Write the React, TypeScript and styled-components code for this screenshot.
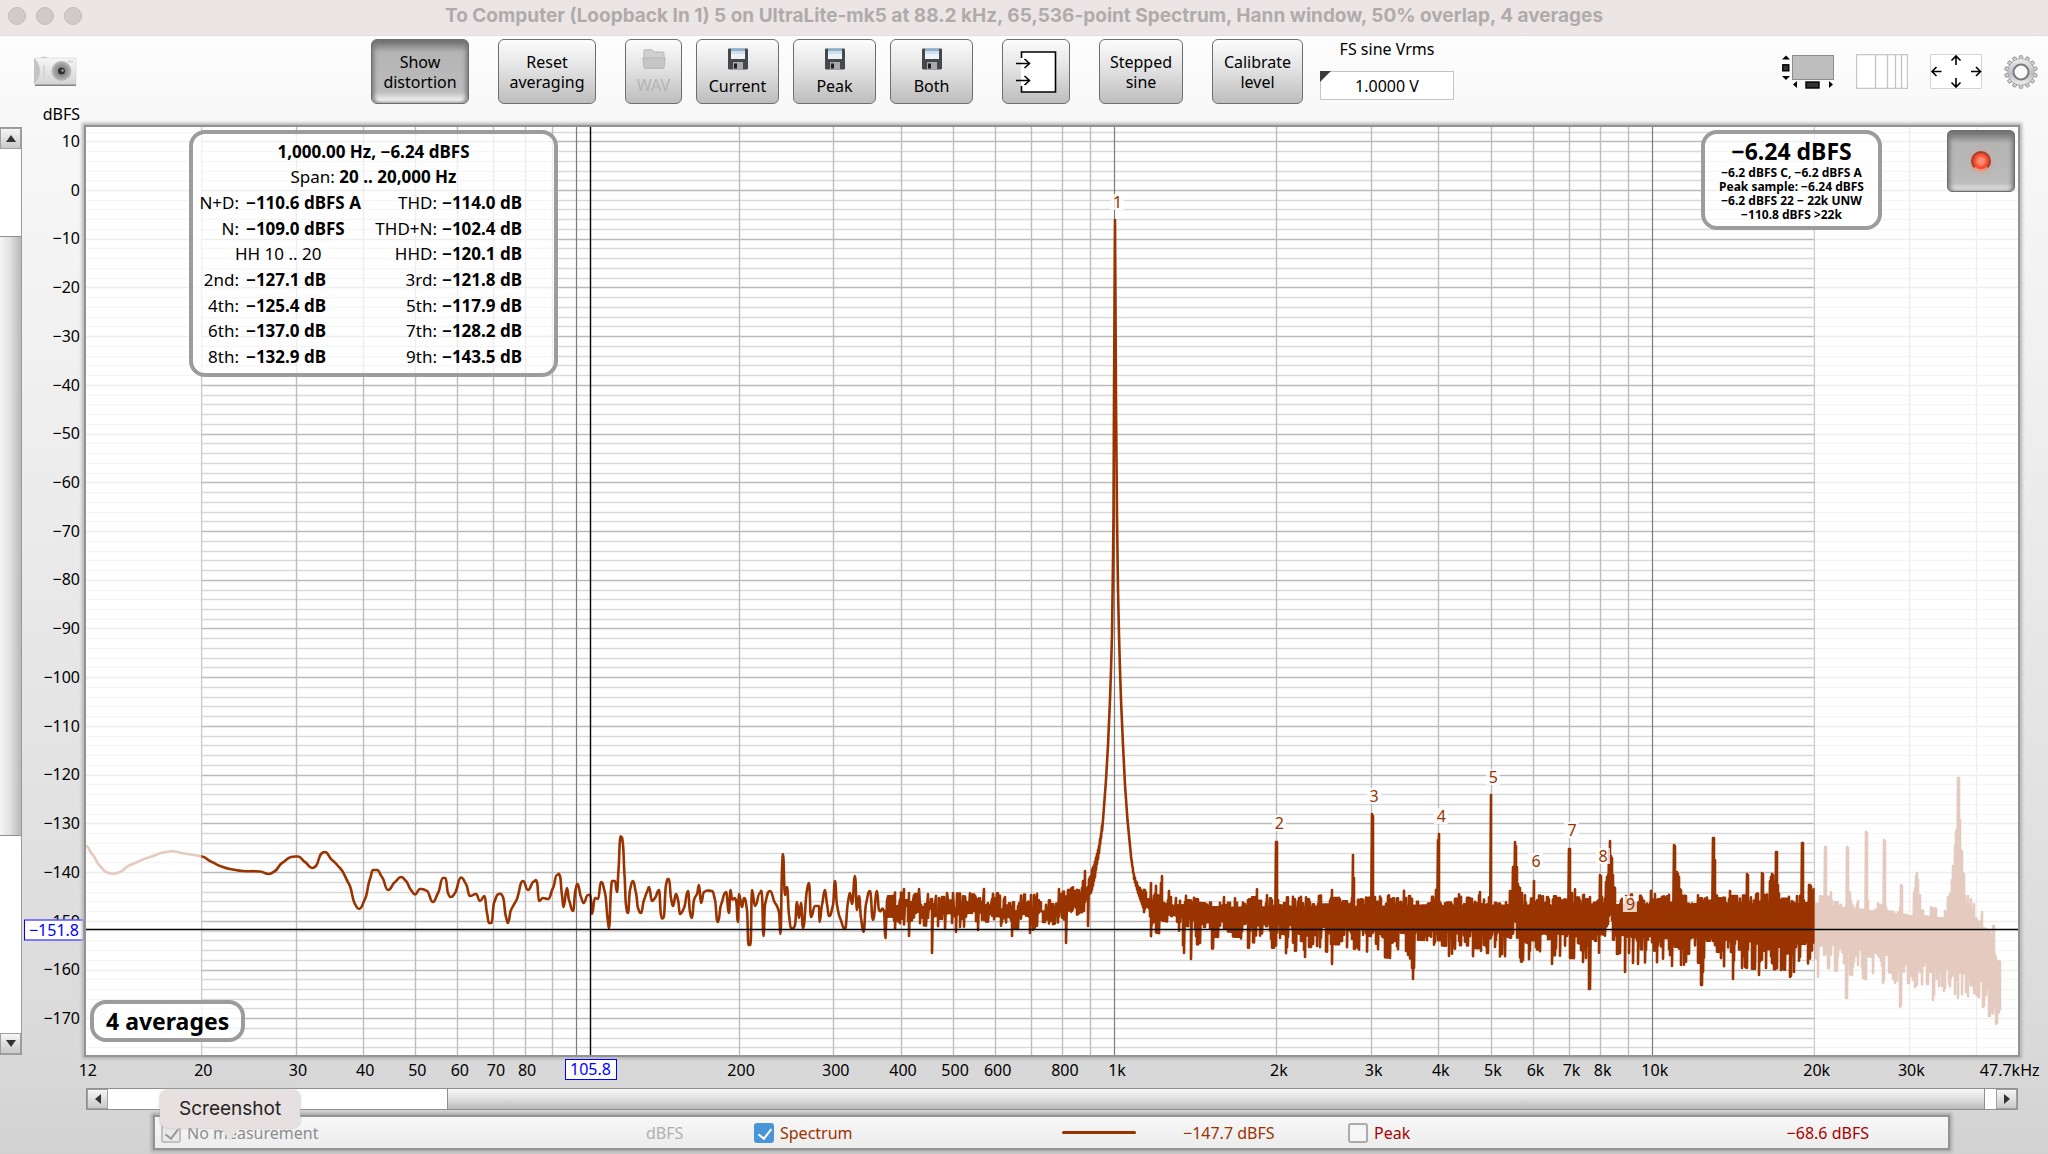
import React from "react";
import styled, { createGlobalStyle, css } from "styled-components";

const sans = `"Noto Sans", "Open Sans", sans-serif`;
const system = `Inter, "Liberation Sans", sans-serif`;
const TRACE = "#993300";

/* ---------- chart scales (drawing units of the chart's viewBox) ---------- */

const W = 1932;
const H = 928;
const fx = (hz: number) => 1029 + 537.8 * Math.log10(hz / 1000);
const dy = (db: number) => 63 - db * 4.872;
const pctX = (x: number) => `${(x / W) * 100}%`;
const pctY = (y: number) => `${(y / H) * 100}%`;

type Pt = [number, number];

/* Points below are kept in window pixels; shift() moves them into the chart. */
const shift = ([x, y]: Pt): Pt => [x - 86, y - 127];

const low: Pt[] = [
  [86, 846], [92, 854], [100, 866], [106, 872], [113, 873.6], [120, 872], [130, 865], [150, 857], [163, 852.5], [172, 851.3], [184, 853.5], [202, 856.5],
  [212, 862], [220, 866], [230, 869], [243, 871], [260, 871.5], [269, 874], [275, 871], [282, 863], [291, 857], [298, 856.5], [305, 862], [312, 868],
  [316, 866], [321, 854], [325, 852], [332, 860], [340, 868], [349, 884], [355, 904], [359, 909], [365, 899], [370, 879], [373, 870], [377, 870],
  [382, 877], [388, 890], [395, 882], [401, 877], [406, 881], [411, 890], [415, 894.5], [420, 889], [427, 891], [433, 902], [438, 893], [443, 878],
  [445.5, 878], [448, 893], [451, 897], [455, 893], [461, 877.5], [466, 884], [470, 896], [476, 894], [480, 901], [484.5, 896], [487, 913], [489, 923],
  [491.5, 923], [494, 903], [499, 894], [503, 897], [506, 917], [508, 923], [511, 910], [516, 901], [523, 881], [528, 890], [534, 881.5], [537, 882],
  [539, 901], [543, 898], [548, 899], [553, 888], [557, 875], [560, 876], [562, 895], [563.5, 907], [567, 888], [569, 900], [573, 911], [575.5, 890],
  [577.5, 884], [581, 897], [583.5, 903], [588, 895], [590.5, 895], [592, 914], [595, 898], [598, 899], [601, 882], [605, 893], [608, 922], [609, 928],
  [611, 890], [612, 881], [615, 881], [617, 892], [618.5, 870], [620, 840], [621.5, 837], [623, 845], [624.5, 875], [626, 905], [628, 913], [630, 890],
  [633, 881], [636, 893], [638, 908], [641, 913], [644, 900], [647, 892], [649, 887], [652, 901], [655, 898], [659, 890], [661, 915], [663.5, 918],
  [666, 885], [669, 879], [671, 898], [673, 906], [676, 894], [678, 900], [680, 914], [684, 908], [688, 891], [690, 912], [692, 918], [694, 900],
  [697, 894], [699, 885], [701, 903], [704, 892], [712, 891], [715, 900], [717, 920], [718, 922], [721, 905], [726, 892], [729, 913], [730.5, 890],
  [732, 899], [736, 900], [738, 922], [739, 894], [742, 907], [744, 898], [747, 910], [748.5, 945], [750.5, 945], [752, 890], [755, 906], [760, 893],
  [762, 895], [763.5, 936], [765, 905], [770, 891], [775, 903], [779, 912], [780.5, 934], [782, 870], [783, 854], [785, 895], [787, 887], [789, 915],
  [791, 928], [795, 925], [797, 902], [799, 918], [801, 903], [803, 928], [807, 890], [809, 883], [811, 917], [815, 906], [819, 906], [819.5, 922],
  [822, 905], [825, 890], [827, 904], [829, 916], [833, 905], [835, 881], [837, 905], [840, 918], [845, 929], [848, 902], [850, 893], [852, 904],
  [855, 876], [857, 910], [859, 896], [861, 918], [863.5, 932], [866, 904], [870, 891], [873, 920], [877, 891], [879, 910], [884, 911], [885.5, 938],
];

const dips: Record<number, number> = {
  895: 929, 909: 936, 932: 953, 945: 929, 956: 932, 978: 930, 1012: 936, 1030: 933, 1066: 943, 1088: 926,
  1184: 953, 1191: 959, 1332: 964, 1305: 957, 1390: 958, 1412: 968, 1413: 979, 1414: 968, 1449: 956, 1552: 964, 1583: 962, 1589: 989, 1590: 989,
  1625: 972, 1633: 963, 1638: 964, 1672: 966, 1681: 965, 1701: 985, 1702: 985, 1703: 972, 1733: 979, 1742: 968, 1759: 975, 1781: 970, 1782: 969,
  1790: 977, 1791: 976, 1794: 972, 1818: 977, 1846: 998, 1847: 998, 1863: 978, 1884: 980, 1893: 979, 1900: 1007, 1901: 1005, 1915: 987, 1933: 1000,
  1934: 995, 1944: 991, 1966: 992, 1983: 1007, 1984: 1006, 1989: 1016, 1990: 1016, 1996: 1024, 1997: 1023,
};

const peaks: Record<number, number> = {
  904: 889, 919: 889, 928: 894, 947: 893, 953: 893, 984: 889, 1005: 897, 1031: 895, 1059: 889, 1069: 890, 1075: 891, 1083: 881, 1085: 871,
  1151: 883, 1161: 883, 1162: 876, 1169: 891, 1276: 842, 1277: 842, 1353: 855, 1354: 878, 1372: 814, 1373: 816, 1436: 890,
  1438: 840, 1439: 834, 1480: 892, 1491: 795, 1510: 891, 1512: 891, 1513: 867, 1514: 867, 1515: 842, 1516: 846, 1517: 867,
  1518: 884, 1519: 887, 1520: 888, 1522: 893, 1534: 881, 1569: 849, 1570: 849, 1600: 875, 1601: 876, 1606: 882, 1607: 877, 1608: 875, 1609: 850,
  1610: 841, 1611: 856, 1612: 858, 1613: 875, 1614: 887, 1615: 888, 1655: 894, 1674: 845, 1675: 846, 1676: 872, 1677: 872, 1678: 874, 1679: 877,
  1680: 889, 1681: 890, 1713: 838, 1714: 838, 1715: 860, 1730: 891, 1747: 874, 1748: 875, 1762: 873, 1763: 874, 1770: 881, 1771: 877, 1772: 874,
  1773: 875, 1774: 881, 1776: 852, 1777: 852, 1778: 885, 1802: 843, 1803: 843, 1809: 885, 1810: 885, 1811: 886, 1813: 890, 1814: 889, 1825: 847,
  1826: 847, 1847: 847, 1848: 848, 1866: 832, 1867: 833, 1884: 840, 1885: 841, 1901: 885, 1902: 886, 1914: 893, 1915: 888, 1916: 876, 1917: 873,
  1918: 880, 1920: 895, 1948: 897, 1950: 894, 1951: 893, 1952: 880, 1953: 866, 1954: 866, 1955: 846, 1956: 831, 1957: 830, 1958: 778, 1959: 778,
  1960: 820, 1961: 850, 1962: 852, 1963: 873, 1964: 874, 1965: 895, 1968: 896, 1974: 904, 1982: 912, 1993: 926, 1994: 926,
};

/* Places where the lower edge of the noise band lifts off, baring the grid. */
const lifts: Record<number, number> = {
  1353: 914, 1514: 921, 1515: 921, 1516: 922, 1606: 927, 1607: 926, 1608: 924, 1609: 916, 1610: 911, 1611: 914, 1612: 920,
};

const makeRandom = (start: number) => {
  let s = start;
  return () => {
    s = (s * 1664525 + 1013904223) % 4294967296;
    return s / 4294967296;
  };
};

const lerp = (table: Pt[], x: number) => {
  for (let i = 1; i < table.length; i++) {
    if (x <= table[i][0]) {
      const [x0, y0] = table[i - 1];
      const [x1, y1] = table[i];
      return y0 + ((y1 - y0) * (x - x0)) / (x1 - x0);
    }
  }
  return table[table.length - 1][1];
};

const upper: Pt[] = [[886, 899], [1050, 901], [1070, 896], [1082, 889], [1088, 880], [1094, 866], [1099, 846], [1103, 820]];
const lowerMid: Pt[] = [[886, 917], [1000, 921], [1050, 922], [1070, 916], [1088, 903], [1094, 882], [1099, 852], [1103, 824]];
const bandTop: Pt[] = [[1131, 853], [1134, 873], [1138, 884], [1144, 897], [1160, 903], [1240, 905], [1500, 903], [1815, 901], [1850, 906], [1900, 913], [1945, 916], [1968, 908], [1978, 925], [1990, 930], [1995, 952], [2000, 968]];
const bandBottom: Pt[] = [[1131, 857], [1134, 879], [1138, 893], [1144, 910], [1150, 922], [1200, 932], [1300, 937], [1450, 942], [1640, 947], [1815, 954], [1860, 961], [1900, 969], [1940, 976], [1975, 985], [1990, 1000], [2000, 1018]];

const buildTrace = () => {
  const r = makeRandom(77123);
  const l = low.map(shift);
  let d = `M${l[0][0]} ${l[0][1]}`;
  for (let i = 0; i < l.length - 1; i++) {
    const a = l[i];
    const b = l[i + 1];
    const m = (a[0] + b[0]) / 2;
    const p = l[Math.max(0, i - 1)];
    const n = l[Math.min(l.length - 1, i + 2)];
    const turn = (b[1] - a[1]) * (a[1] - p[1]) <= 0;
    const turnNext = (n[1] - b[1]) * (b[1] - a[1]) <= 0;
    const c1 = turn ? a[1] : a[1] + (((b[1] - p[1]) / (b[0] - p[0] || 1)) * (b[0] - a[0])) / 3;
    const c2 = turnNext ? b[1] : b[1] - (((n[1] - a[1]) / (n[0] - a[0] || 1)) * (b[0] - a[0])) / 3;
    d += `C${m} ${c1.toFixed(1)} ${m} ${c2.toFixed(1)} ${b[0]} ${b[1]}`;
  }
  const to = (x: number, y: number) => {
    const [a, b] = shift([x, y]);
    d += `L${a} ${b.toFixed(1)}`;
  };
  let up = 0.5;
  let down = 0.5;
  for (let x = 887; x < 1103; x++) {
    const t = lerp(upper, x);
    const b = lerp(lowerMid, x);
    const spread = x < 1080 ? 20 : x < 1092 ? 12 : 3;
    if (r() > 0.4) up = r();
    if (r() > 0.4) down = r();
    const top = peaks[x] ?? t + (up - 0.4) * spread;
    const bottom = dips[x] ?? b + (down - 0.6) * spread;
    to(x, top);
    if (x % 2 === 0 || dips[x] || x > 1000) to(x, Math.max(bottom, top));
  }
  const skirt: Pt[] = [
    [1103, 820], [1106, 780], [1108, 745], [1110, 700], [1111, 670], [1112, 635], [1113, 560], [1113.5, 517], [1114, 400], [1115, 220],
    [1116, 400], [1117, 517], [1118, 590], [1119, 635], [1120, 670], [1121, 700], [1123, 745], [1125, 785], [1127.5, 820],
  ];
  skirt.forEach(([x, y]) => to(x, y));
  up = 0;
  down = 0;
  for (let x = 1131; x <= 2000; x++) {
    const t = lerp(bandTop, x);
    const b = lerp(bandBottom, x);
    if (r() > 0.5) up = r();
    if (r() > 0.4) down = r();
    const early = x < 1144;
    const spike = !early && r() > 0.95 ? 8 : 0;
    const top = peaks[x] ?? t + 3 - up * up * (early ? 4 : 11) - spike;
    const bottom = lifts[x] ?? dips[x] ?? b + (early ? 0 : down * down * 30 - 12);
    to(x, top);
    to(x, bottom);
  }
  return d;
};

const tracePath = buildTrace();

const minorDb = Array.from({ length: 95 }, (_, i) => 12 - i * 2);
const gridHz = [20, 30, 40, 50, 60, 70, 80, 90, 200, 300, 400, 500, 600, 700, 800, 900, 2000, 3000, 4000, 5000, 6000, 7000, 8000, 9000, 20000, 30000, 40000];
const decades = [100, 1000, 10000];
const yLabels = Array.from({ length: 19 }, (_, i) => 10 - i * 10);
const xLabels: [number, string][] = [
  [12.2, "12"], [20, "20"], [30, "30"], [40, "40"], [50, "50"], [60, "60"], [70, "70"], [80, "80"],
  [200, "200"], [300, "300"], [400, "400"], [500, "500"], [600, "600"], [800, "800"], [1000, "1k"],
  [2000, "2k"], [3000, "3k"], [4000, "4k"], [5000, "5k"], [6000, "6k"], [7000, "7k"], [8000, "8k"],
  [10000, "10k"], [20000, "20k"], [30000, "30k"], [45700, "47.7kHz"],
];
const harmonics: [number, number][] = [[1, 202], [2, 823], [3, 796], [4, 816], [5, 777], [6, 861], [7, 830], [8, 856], [9, 904]];

/* ------------------------------- styles ------------------------------- */

const Global = createGlobalStyle`
  * { box-sizing: border-box; }
  body { margin: 0; font: 16px/20px ${sans}; color: #000; }
  button, input { font: inherit; color: inherit; }
`;

const Window = styled.main`
  min-height: 100vh;
  display: flex;
  flex-direction: column;
  background: linear-gradient(#fdfdfd 36px, #f8f8f8 120px, #f0f0f0 32%, #dadada 90%, #d2d2d2);
`;

const TitleBar = styled.header`
  position: relative;
  display: flex;
  align-items: center;
  height: 36px;
  padding: 0 8px 4px;
  background: #ebe5e5;
  border-bottom: 1px solid #e2dfdf;
`;

const Lights = styled.div`
  position: absolute;
  display: flex;
  gap: 10px;
`;

const Light = styled.button`
  width: 18px;
  height: 18px;
  padding: 0;
  border: 1px solid #c3bcbc;
  border-radius: 50%;
  background: #d1cacb;
`;

const Title = styled.h1`
  flex: 1;
  margin: 0;
  text-align: center;
  font: 700 19px/24px ${system};
  color: #b0abab;
`;

const Toolbar = styled.div`
  display: flex;
  align-items: flex-start;
  height: 68px;
  padding: 3px 10px 0 34px;
`;

const IconButton = styled.button`
  display: flex;
  padding: 0;
  border: 0;
  background: none;
`;

const CameraButton = styled(IconButton)`
  margin-top: 17px;
`;

const Actions = styled.div`
  display: flex;
  gap: 29px;
  margin-left: 294px;
`;

const SaveGroup = styled.div`
  display: flex;
  gap: 14px;
`;

const pressed = css`
  background: linear-gradient(#6a6a6a, #b4b4b4 12px, #bcbcbc 52px, #f0f0f0 60px, #e4e4e4);
  box-shadow: inset 3px 0 4px -1px #777, inset -3px 0 4px -1px #777;
`;

const Tool = styled.button<{ $w: number; $on?: boolean }>`
  display: flex;
  flex-direction: column;
  align-items: center;
  justify-content: center;
  gap: 6px;
  width: ${(p) => p.$w}px;
  height: 65px;
  padding: 0;
  line-height: 20px;
  border: 1px solid #6e6e6e;
  border-radius: 6px;
  background: linear-gradient(#fcfcfc, #e3e3e3 45%, #bdbdbd);
  ${(p) => p.$on && pressed}
  &:disabled {
    color: #b4b4b4;
  }
`;

const FieldGroup = styled.label`
  display: flex;
  flex-direction: column;
  align-items: center;
  gap: 12px;
  margin-left: -12px;
`;

const FieldBox = styled.span`
  position: relative;
  display: block;
  &::before {
    content: "";
    position: absolute;
    left: 0;
    top: 0;
    border-top: 11px solid #3b3b3b;
    border-right: 11px solid transparent;
  }
`;

const Field = styled.input`
  display: block;
  width: 134px;
  height: 29px;
  padding: 0;
  text-align: center;
  background: #fff;
  border: 1px solid #c4c4c4;
`;

const ViewTools = styled.div`
  display: flex;
  align-items: center;
  gap: 22px;
  margin: 15px 0 0 auto;
`;

const Unit = styled.div`
  height: 23px;
  width: 80px;
  text-align: right;
`;

const Workspace = styled.section`
  flex: 1;
  display: grid;
  grid-template-columns: 22px 64px minmax(0, 1fr) 30px;
  grid-template-rows: minmax(600px, 1fr) 33px 22px;
`;

const ScrollV = styled.div`
  display: flex;
  flex-direction: column;
  background: #fff;
  border: 1px solid #9a9a9a;
  border-left: 0;
`;

const ScrollH = styled.div`
  grid-column: 3;
  grid-row: 3;
  display: flex;
  background: #fff;
  border: 1px solid #8f8f8f;
`;

const Arrow = styled.button<{ $dir: "up" | "down" | "left" | "right" }>`
  flex: none;
  display: grid;
  place-items: center;
  width: 21px;
  height: 21px;
  padding: 0;
  border: 1px solid #a0a0a0;
  background: linear-gradient(#f6f6f6, #c9c9c9);
  &::before {
    content: "";
    border: 5px solid transparent;
    ${(p) => p.$dir === "up" && "border-bottom: 7px solid #333; border-top: 0;"}
    ${(p) => p.$dir === "down" && "border-top: 7px solid #333; border-bottom: 0;"}
    ${(p) => p.$dir === "left" && "border-right: 6px solid #333; border-left: 0;"}
    ${(p) => p.$dir === "right" && "border-left: 6px solid #333; border-right: 0;"}
  }
  ${ScrollH} & {
    height: 20px;
  }
`;

const Space = styled.div<{ $grow: number }>`
  flex: ${(p) => p.$grow} 1 0;
`;

const ThumbV = styled(Space)`
  background: linear-gradient(90deg, #f6f6f6, #e2e2e2 45%, #b9b9b9);
  border: solid #8f8f8f;
  border-width: 1px 0;
`;

const ThumbH = styled(Space)`
  background: linear-gradient(#f8f8f8, #e2e2e2 45%, #b9b9b9);
  border: solid #8f8f8f;
  border-width: 0 1px;
`;

const AxisY = styled.div`
  position: relative;
  display: flex;
  flex-direction: column;
  justify-content: space-between;
  align-items: flex-end;
  padding: 4px 6px 27px 0;
`;

const AxisX = styled.div`
  position: relative;
  grid-column: 3;
  grid-row: 2;
`;

const Tick = styled.span`
  position: absolute;
  top: 5px;
  transform: translateX(-50%);
  padding-left: 4px;
  white-space: nowrap;
`;

const cursorBox = css`
  position: absolute;
  height: 21px;
  line-height: 19px;
  text-align: center;
  color: #00f;
  background: #fff;
  border: 1px solid #00f;
`;

const CursorX = styled.output`
  ${cursorBox}
  top: 4px;
  width: 52px;
  transform: translateX(-50%);
`;

const CursorY = styled.output`
  ${cursorBox}
  right: 2px;
  width: 60px;
  transform: translateY(-50%);
`;

const Plot = styled.div`
  position: relative;
  background: #fff;
  box-shadow: 0 0 0 2px #939393, 0 0 3px 4px #b4b4b4;
`;

const Chart = styled.svg`
  position: absolute;
  inset: 0;
  width: 100%;
  height: 100%;
  overflow: hidden;
`;

const Harmonic = styled.span`
  position: absolute;
  padding: 0 2px 0 3px;
  line-height: 16px;
  color: ${TRACE};
  background: rgba(255, 255, 255, 0.78);
  transform: translate(-50%, -50%);
`;

const panel = css`
  position: absolute;
  background: rgba(255, 255, 255, 0.75);
  border: 4px solid #9c9c9c;
  border-radius: 16px;
`;

const Distortion = styled.section`
  ${panel}
  left: 103px;
  top: 3px;
  width: 369px;
  height: 247px;
  padding: 5px 28px 3px 6px;
  display: grid;
  grid-template-columns: 40px 7px 1fr 76px 5px 84px;
  grid-auto-rows: 1fr;
  align-items: center;
  font-size: 17px;
`;

const Wide = styled.p`
  grid-column: 1 / -1;
  margin: 0 -22px 0 0;
  text-align: center;
`;

const Name = styled.span<{ $right?: boolean }>`
  grid-column: ${(p) => (p.$right ? 4 : 1)};
  justify-self: end;
  white-space: nowrap;
`;

const Value = styled.b<{ $right?: boolean }>`
  grid-column: ${(p) => (p.$right ? 6 : 3)};
  white-space: nowrap;
`;

const Harm = styled.span`
  grid-column: 1 / 4;
  padding-left: 36px;
`;

const Level = styled.section`
  ${panel}
  right: 136px;
  top: 3px;
  width: 181px;
  height: 100px;
  padding-top: 2px;
  text-align: center;
  font-weight: 700;
  font-size: 12px;
  line-height: 14px;
  white-space: nowrap;
`;

const Big = styled.div`
  font-size: 23px;
  line-height: 30px;
`;

const Record = styled.button`
  position: absolute;
  right: 3px;
  top: 3px;
  display: grid;
  place-items: center;
  width: 68px;
  height: 62px;
  padding: 0;
  border: 1px solid #6e6e6e;
  border-radius: 5px;
  ${pressed}
`;

const Lamp = styled.span`
  width: 20px;
  height: 20px;
  border-radius: 50%;
  border: 2px solid #93432f;
  border-bottom-color: #e8907a;
  background: radial-gradient(circle, #ff8a76 25%, #fb4426 60%);
  box-shadow: 0 1px 4px 1px #d9a493;
`;

const Averages = styled.div`
  ${panel}
  left: 4px;
  bottom: 13px;
  padding: 5px 12px;
  font-size: 23px;
  line-height: 24px;
  font-weight: 700;
`;

const Legend = styled.footer`
  position: relative;
  display: flex;
  align-items: center;
  height: 31px;
  margin: 7px 100px 6px 155px;
  padding: 0 79px 0 6px;
  background: linear-gradient(#f8f8f8, #ececec);
  box-shadow: 0 0 0 2px #939393, 0 0 3px 4px #ababab;
`;

const Check = styled.label<{ $color: string; $w: number }>`
  display: flex;
  align-items: center;
  gap: 6px;
  width: ${(p) => p.$w}px;
  color: ${(p) => p.$color};
`;

const Box = styled.input`
  appearance: none;
  position: relative;
  flex: none;
  width: 20px;
  height: 20px;
  margin: 0;
  border: 2px solid #ababab;
  border-radius: 3px;
  background: #f6f6f6;
  &:checked::after {
    content: "";
    position: absolute;
    left: 5px;
    top: 1px;
    width: 6px;
    height: 11px;
    border: solid #fff;
    border-width: 0 2px 2px 0;
    transform: rotate(38deg);
  }
  &:checked {
    background: #4a94d8;
    border-color: #4a94d8;
  }
  &:disabled {
    background: #e9e9e9;
    border: 2px solid #c0c0c0;
  }
  &:disabled::after {
    border-color: #999;
  }
`;

const Reading = styled.span<{ $color: string; $w?: number }>`
  width: ${(p) => (p.$w ? `${p.$w}px` : "auto")};
  color: ${(p) => p.$color};
`;

const Swatch = styled.span`
  width: 74px;
  height: 3px;
  margin-right: 47px;
  border-radius: 2px;
  background: ${TRACE};
`;

const Filler = styled.span`
  flex: 1;
`;

const Tooltip = styled.div`
  position: absolute;
  left: 5px;
  bottom: 20px;
  z-index: 2;
  padding: 7px 19px;
  font: 19px/24px ${system};
  color: #262323;
  background: #e7e0e0;
  border-radius: 8px;
  box-shadow: 0 0 3px #b9b3b3;
  &::after {
    content: "";
    position: absolute;
    left: 50%;
    top: 100%;
    margin-left: -9px;
    border: 9px solid transparent;
    border-top: 13px solid #e7e0e0;
    border-bottom: 0;
  }
`;

/* ------------------------------- icons ------------------------------- */

const Camera = () => (
  <svg width="43" height="31" viewBox="0 0 43 31" aria-hidden="true">
    <defs>
      <linearGradient id="camBody" x2="0" y2="1">
        <stop offset="0" stopColor="#f7f7f7" />
        <stop offset="1" stopColor="#d2d2d2" />
      </linearGradient>
      <radialGradient id="camLens">
        <stop offset="0" stopColor="#666" />
        <stop offset=".45" stopColor="#8b8b8b" />
        <stop offset="1" stopColor="#bdbdbd" />
      </radialGradient>
    </defs>
    <path d="M6 2q4-3 9 0l1 2H5z" fill="#c9c9c9" />
    <path d="M1 2H42V29H1Q11 15 1 2z" fill="url(#camBody)" stroke="#d5d5d5" strokeWidth=".7" />
    <path d="M0 2Q12 15 0 29z" fill="#c4c4c4" />
    <path d="M1 29.300H42" stroke="#838383" strokeWidth="1.500" />
    <path d="M10 9v12" stroke="#c8c8c8" />
    <rect x="34" y="4" width="5" height="3" fill="#ddd" />
    <circle cx="27.500" cy="15" r="10" fill="url(#camLens)" />
    <circle cx="27.500" cy="15" r="5.500" fill="#909090" />
    <circle cx="27.500" cy="15" r="3.500" fill="#2e2e2e" />
    <circle cx="28.500" cy="14.500" r="1.200" fill="#aaa" />
  </svg>
);

const Floppy = () => (
  <svg width="20" height="22" viewBox="0 0 20 22" aria-hidden="true">
    <path d="M0 1.500Q0 .5 1 .5H19Q20 .5 20 1.500V20.500L19 21.500H1L0 20.500z" fill="#47484b" />
    <path d="M3 .5H17V11H3z" fill="#cfe0ef" />
    <path d="M3 .5H17V3H3z" fill="#8fb0c8" />
    <path d="M3 6H17V11H3z" fill="#edf3f8" />
    <path d="M5 14H15V21.500H5z" fill="#a9a9ab" />
    <path d="M6 15.500H9V20.500H6z" fill="#1e1e1e" />
  </svg>
);

const Folder = () => (
  <svg width="24" height="20" viewBox="0 0 24 20" aria-hidden="true">
    <path d="M2 10V1.500Q2 .8 3 .8H10L12 3H21Q22 3 22 4V10z" fill="#cfcfcf" stroke="#b7b7b7" />
    <path d="M.8 9H23.200L22 18.500Q22 19.300 21 19.300H3Q2 19.300 2 18.500z" fill="#c6c6c6" stroke="#b5b5b5" />
  </svg>
);

const InputIcon = () => (
  <svg width="42" height="42" viewBox="0 0 42 42" fill="none" stroke="#000" strokeWidth="1.600" aria-hidden="true">
    <path d="M6 1H41V41H6z" fill="#fff" stroke="none" />
    <path d="M6.500 7V1H40.500V41H6.500V35" />
    <path d="M1 12.500H14M9.500 8l5 4.500l-5 4.500M1 29.500H14M9.500 25l5 4.500l-5 4.500" />
  </svg>
);

const ScrollbarsIcon = () => (
  <svg width="52" height="34" viewBox="0 0 52 34" aria-hidden="true">
    <rect x="10.500" y=".5" width="41" height="24" fill="#bebebe" stroke="#8d8d8d" />
    <path d="M0 4.500L4 .5L8 4.500zM0 21L4 25L8 21zM15 26v7l-4-3.500zM47 26v7l4-3.500z" />
    <rect x=".8" y="9.800" width="6" height="6" fill="#333" stroke="#000" strokeWidth="1.400" />
    <rect x="24" y="27" width="13" height="6" fill="#333" stroke="#000" strokeWidth="1.400" />
  </svg>
);

const ColumnsIcon = () => (
  <svg width="52" height="35" viewBox="0 0 52 35" aria-hidden="true">
    <path d="M.5 .5H51.500V34.500H.5zM19.500 .5V34M31.500 .5V34M39.500 .5V34M45.500 .5V34" fill="#fff" stroke="#c4c4c4" strokeWidth="1.300" />
  </svg>
);

const FitIcon = () => (
  <svg width="52" height="35" viewBox="0 0 52 35" aria-hidden="true">
    <path d="M.5 .5H51.500V34.500H.5z" fill="#fff" stroke="#d4d4d4" />
    <path
      d="M26 11V2M21.500 6.500L26 2L30.500 6.500M26 24V33M21.500 28.500L26 33L30.500 28.500M11.500 17.500H2M6.500 13L2 17.500L6.500 22M41 17.500H50.500M46 13L50.500 17.500L46 22"
      fill="none"
      stroke="#000"
      strokeWidth="1.600"
    />
  </svg>
);

const Gear = () => (
  <svg width="34" height="34" viewBox="-17 -17 34 34" aria-hidden="true">
    <defs>
      <linearGradient id="gear" x2="0" y2="1">
        <stop offset="0" stopColor="#e6e6e6" />
        <stop offset=".6" stopColor="#bcbcc8" />
        <stop offset="1" stopColor="#e6e6e6" />
      </linearGradient>
    </defs>
    {Array.from({ length: 14 }, (_, i) => (
      <path key={i} d="M-2.200 -12L-1.400 -16.300H1.400L2.200 -12z" fill="#cfcfd4" stroke="#8f8f8f" strokeWidth=".8" transform={`rotate(${(i * 360) / 14})`} />
    ))}
    <circle r="10.500" fill="none" stroke="#979797" strokeWidth="5.800" />
    <circle r="10.500" fill="none" stroke="url(#gear)" strokeWidth="4.800" />
    <circle r="7.500" fill="#fafafa" stroke="#7c7c7c" strokeWidth="2" />
  </svg>
);

/* ------------------------------ components ------------------------------ */

const crisp = (v: number) => Math.round(v) + 0.5;

const Spectrum = () => (
  <Chart viewBox={`0 0 ${W} ${H}`} preserveAspectRatio="none" role="img" aria-label="Spectrum">
    {minorDb.map((db) => {
      const y = crisp(dy(db));
      return <path key={db} d={`M0 ${y}H${W}`} stroke={db % 10 === 0 ? "#bababa" : "#d9d9d9"} strokeWidth="1.300" />;
    })}
    {gridHz.map((hz) => (
      <path key={hz} d={`M${crisp(fx(hz) - 0.4)} 0V${H}`} stroke="#bdbdbd" strokeWidth="1.400" />
    ))}
    {decades.map((hz) => (
      <path key={hz} d={`M${crisp(fx(hz) - 0.8)} 0V${H}`} stroke="#7c7c7c" strokeWidth="1.200" />
    ))}
    <path d={tracePath} fill="none" stroke={TRACE} strokeWidth="2.600" strokeLinejoin="round" />
    <path d={`M0 0H${fx(20)}V${H}H0zM${fx(20000)} 0H${W}V${H}H${fx(20000)}z`} fill="#fff" fillOpacity=".75" />
    <path d={`M0 802.500H${W}M504.500 0V${H}`} stroke="#000" strokeWidth="1.400" />
  </Chart>
);

const rows: [string, string, string, string][] = [
  ["N+D:", "−110.6 dBFS A", "THD:", "−114.0 dB"],
  ["N:", "−109.0 dBFS", "THD+N:", "−102.4 dB"],
  ["", "HH 10 .. 20", "HHD:", "−120.1 dB"],
  ["2nd:", "−127.1 dB", "3rd:", "−121.8 dB"],
  ["4th:", "−125.4 dB", "5th:", "−117.9 dB"],
  ["6th:", "−137.0 dB", "7th:", "−128.2 dB"],
  ["8th:", "−132.9 dB", "9th:", "−143.5 dB"],
];

const minus = (n: number) => (n < 0 ? `−${-n}` : `${n}`);

export default function App() {
  return (
    <Window>
      <Global />
      <TitleBar>
        <Lights>
          <Light aria-label="Close" />
          <Light aria-label="Minimise" />
          <Light aria-label="Zoom" />
        </Lights>
        <Title>To Computer (Loopback In 1) 5 on UltraLite-mk5 at 88.2 kHz, 65,536-point Spectrum, Hann window, 50% overlap, 4 averages</Title>
      </TitleBar>

      <Toolbar>
        <CameraButton aria-label="Capture image"><Camera /></CameraButton>
        <Actions>
          <Tool $w={98} $on aria-pressed="true"><span>Show<br />distortion</span></Tool>
          <Tool $w={98}><span>Reset<br />averaging</span></Tool>
          <SaveGroup>
            <Tool $w={57} disabled><Folder />WAV</Tool>
            <Tool $w={83}><Floppy />Current</Tool>
            <Tool $w={83}><Floppy />Peak</Tool>
            <Tool $w={83}><Floppy />Both</Tool>
          </SaveGroup>
          <Tool $w={68} aria-label="Input"><InputIcon /></Tool>
          <Tool $w={84}><span>Stepped<br />sine</span></Tool>
          <Tool $w={91}><span>Calibrate<br />level</span></Tool>
          <FieldGroup>
            FS sine Vrms
            <FieldBox><Field defaultValue="1.0000 V" /></FieldBox>
          </FieldGroup>
        </Actions>
        <ViewTools>
          <IconButton aria-label="Scrollbars"><ScrollbarsIcon /></IconButton>
          <IconButton aria-label="Frequency axis"><ColumnsIcon /></IconButton>
          <IconButton aria-label="Fit to data"><FitIcon /></IconButton>
          <IconButton aria-label="Settings"><Gear /></IconButton>
        </ViewTools>
      </Toolbar>

      <Unit>dBFS</Unit>

      <Workspace>
        <ScrollV>
          <Arrow $dir="up" aria-label="Scroll up" />
          <Space $grow={87} />
          <ThumbV $grow={601} />
          <Space $grow={198} />
          <Arrow $dir="down" aria-label="Scroll down" />
        </ScrollV>
        <AxisY>
          {yLabels.map((db) => (
            <span key={db}>{minus(db)}</span>
          ))}
          <CursorY style={{ top: pctY(803) }}>−151.8</CursorY>
        </AxisY>
        <Plot>
          <Spectrum />
          {harmonics.map(([n, y]) => (
            <Harmonic key={n} style={{ left: pctX(fx(n * 1000) + 2), top: pctY(y - 127) }}>{n}</Harmonic>
          ))}
          <Distortion>
            <Wide><b>1,000.00 Hz, −6.24 dBFS</b></Wide>
            <Wide>Span: <b>20 .. 20,000 Hz</b></Wide>
            {rows.map(([a, b, c, d]) => (
              <React.Fragment key={c}>
                {a ? (
                  <>
                    <Name>{a}</Name>
                    <Value>{b}</Value>
                  </>
                ) : (
                  <Harm>{b}</Harm>
                )}
                <Name $right>{c}</Name>
                <Value $right>{d}</Value>
              </React.Fragment>
            ))}
          </Distortion>
          <Level>
            <Big>−6.24 dBFS</Big>
            −6.2 dBFS C, −6.2 dBFS A
            <br />
            Peak sample: −6.24 dBFS
            <br />
            −6.2 dBFS 22 − 22k UNW
            <br />
            −110.8 dBFS &gt;22k
          </Level>
          <Record aria-label="Record" aria-pressed="true"><Lamp /></Record>
          <Averages>4 averages</Averages>
        </Plot>
        <AxisX>
          {xLabels.map(([hz, text]) => (
            <Tick key={text} style={{ left: pctX(fx(hz)) }}>{text}</Tick>
          ))}
          <CursorX style={{ left: pctX(504.5) }}>105.8</CursorX>
        </AxisX>
        <ScrollH>
          <Arrow $dir="left" aria-label="Scroll left" />
          <Space $grow={340} />
          <ThumbH $grow={1538} />
          <Space $grow={11} />
          <Arrow $dir="right" aria-label="Scroll right" />
        </ScrollH>
      </Workspace>

      <Legend>
        <Check $color="#8d8d8d" $w={485}>
          <Box type="checkbox" defaultChecked disabled />
          No measurement
        </Check>
        <Reading $color="#b0b0b0" $w={108}>dBFS</Reading>
        <Check $color={TRACE} $w={308}>
          <Box type="checkbox" defaultChecked />
          Spectrum
        </Check>
        <Swatch />
        <Reading $color={TRACE} $w={165}>−147.7 dBFS</Reading>
        <Check $color="#aa0000" $w={100}>
          <Box type="checkbox" />
          Peak
        </Check>
        <Filler />
        <Reading $color="#aa0000">−68.6 dBFS</Reading>
        <Tooltip role="tooltip">Screenshot</Tooltip>
      </Legend>
    </Window>
  );
}
